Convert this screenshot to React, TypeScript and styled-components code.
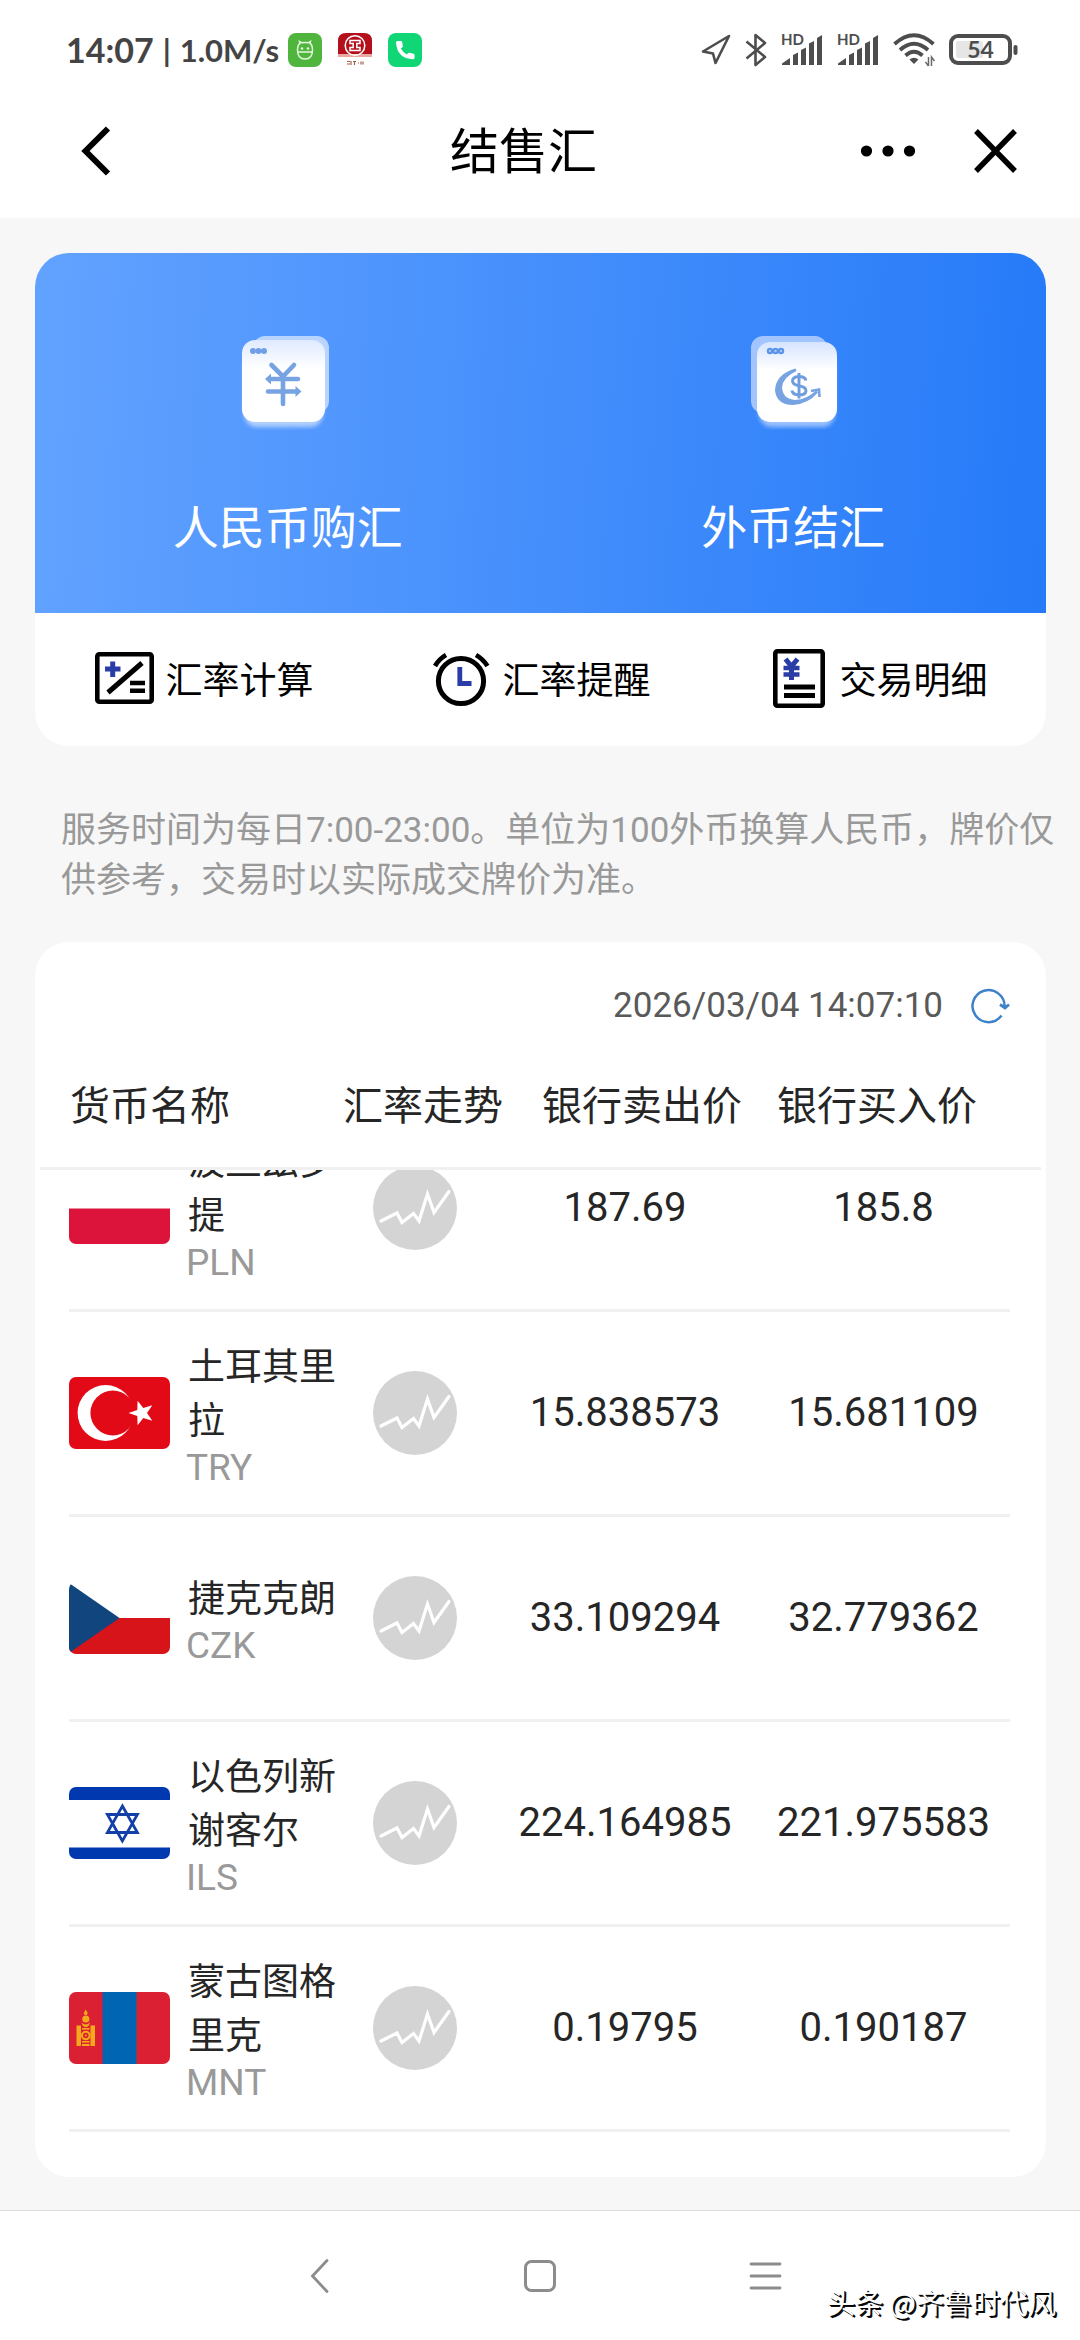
import React, { useLayoutEffect, useRef } from 'react';
import styled, { createGlobalStyle } from 'styled-components';

const GlobalStyle = createGlobalStyle`
  * { box-sizing: border-box; }
  html, body { margin: 0; padding: 0; }
  body {
    background: #f7f7f7;
    color: #262626;
    font-family: Roboto, "Noto Sans CJK SC", sans-serif;
  }
  button {
    margin: 0;
    padding: 0;
    border: 0;
    background: none;
    color: inherit;
    font: inherit;
    cursor: pointer;
  }
  svg { display: block; flex: none; }
`;

const Screen = styled.div`
  display: flex;
  flex-direction: column;
  height: 100vh;
`;

/* ---------- top ---------- */

const StatusBar = styled.div`
  display: flex;
  align-items: center;
  justify-content: space-between;
  height: 100px;
  padding: 0 62px 0 66px;
  background: #fff;
  color: #444;
  font-family: Lato, "Noto Sans CJK SC", sans-serif;
  font-weight: 700;
`;

const StatusGroup = styled.div<{ $gap: number }>`
  display: flex;
  align-items: center;
  gap: ${(p) => p.$gap}px;
`;

const StatusText = styled.span<{ $size: number }>`
  font-size: ${(p) => p.$size}px;
  line-height: 40px;
  white-space: nowrap;
`;

const TitleBar = styled.header`
  display: flex;
  align-items: center;
  justify-content: space-between;
  height: 118px;
  padding: 0 63px 16px 81px;
  background: #fff;
  color: #000;
`;

const BackButton = styled.button`
  width: 105px;
  height: 60px;
  display: flex;
  align-items: center;
`;

const Title = styled.h1`
  margin: 0;
  padding-top: 4px;
  font-size: 49px;
  line-height: 60px;
  font-weight: 400;
`;

const TitleActions = styled.div`
  display: flex;
  align-items: center;
  gap: 59px;
`;

/* ---------- content ---------- */

const Content = styled.main`
  flex: 1;
  min-height: 0;
  display: flex;
  flex-direction: column;
  padding: 35px 34px 33px 35px;
`;

const ServiceCard = styled.section`
  flex: none;
  border-radius: 34px;
  overflow: hidden;
  background: #fff;
`;

const Hero = styled.div`
  display: grid;
  grid-template-columns: 1fr 1fr;
  background: linear-gradient(93deg, #62a2ff 0%, #458ffc 50%, #267af8 100%);
`;

const HeroButton = styled.button`
  display: flex;
  flex-direction: column;
  align-items: center;
  gap: 68px;
  padding: 77px 0 55px;
  color: #fff;
  font-size: 46px;
  line-height: 60px;
`;

const QuickActions = styled.div`
  display: grid;
  grid-template-columns: repeat(3, 1fr);
`;

const QuickButton = styled.button`
  display: flex;
  align-items: center;
  justify-content: center;
  gap: 12px;
  padding: 36px 0 37px;
  color: #000;
  white-space: nowrap;
`;

const QuickLabel = styled.span`
  padding-top: 6px;
  font-size: 37px;
  line-height: 54px;
`;

const Notice = styled.p`
  flex: none;
  margin: 60px -16px 36px 26px;
  color: #999;
  font-size: 35px;
  line-height: 50px;
`;

const RateCard = styled.section`
  flex: 1;
  min-height: 0;
  display: flex;
  flex-direction: column;
  border-radius: 34px;
  background: #fff;
  overflow: hidden;
`;

const Updated = styled.div`
  flex: none;
  display: flex;
  align-items: center;
  justify-content: flex-end;
  gap: 27px;
  padding: 39px 36px 0 0;
  color: #595959;
  font-size: 35px;
  line-height: 50px;
`;

const RateTable = styled.table`
  flex: 1;
  min-height: 0;
  display: flex;
  flex-direction: column;
`;

const RateHead = styled.thead`
  flex: none;
  display: block;
  margin: 0 5px;
  border-bottom: 3px solid #f0f0f0;
`;

const HeadRow = styled.tr`
  display: grid;
  grid-template-columns: 273fr 199fr 235fr 264fr;
  padding: 51px 0 35px 30px;
`;

const HeadCell = styled.th`
  padding: 0;
  text-align: left;
  font-size: 40px;
  line-height: 50px;
  font-weight: 400;
  white-space: nowrap;
`;

const RateBody = styled.tbody`
  flex: 1;
  min-height: 0;
  display: block;
  padding: 0 36px 45px 34px;
  overflow-y: auto;
  scrollbar-width: none;
`;

const RateRow = styled.tr`
  display: grid;
  grid-template-columns: 268fr 156fr 264fr 253fr;
  align-items: center;
  height: 205px;
  border-bottom: 3px solid #f0f0f0;
`;

const Cell = styled.td`
  display: flex;
  align-items: center;
  justify-content: center;
  padding: 0;
  font-size: 40px;
  line-height: 50px;
`;

const CurrencyCell = styled(Cell)`
  justify-content: flex-start;
  gap: 16px;
`;

const FlagFrame = styled.span`
  flex: none;
  width: 101px;
  height: 72px;
  border-radius: 7px;
  overflow: hidden;
`;

const CurrencyText = styled.span`
  display: flex;
  flex-direction: column;
  font-size: 37px;
`;

const CurrencyName = styled.span`
  padding: 2px 0 0 2px;
  line-height: 54px;
`;

const CurrencyCode = styled.span`
  color: #999;
  line-height: 38px;
`;

/* ---------- bottom ---------- */

const SystemNav = styled.nav`
  position: relative;
  display: flex;
  align-items: center;
  justify-content: center;
  gap: 183px;
  height: 130px;
  border-top: 1px solid #dcdcdc;
  background: #fff;
`;

const Watermark = styled.span`
  position: absolute;
  right: 24px;
  bottom: 18px;
  color: #fff;
  font-family: "Noto Sans CJK SC", sans-serif;
  font-size: 28px;
  line-height: 40px;
  text-shadow: 1px 1px 0 #000, 2px 2px 0 #111;
`;

/* ---------- status icons ---------- */

const CleanerIcon = () => (
  <svg width="34" height="34" viewBox="0 0 34 34">
    <rect width="34" height="34" rx="8" fill="#4fb53c" />
    <g fill="none" stroke="#e4f7df" strokeWidth="1.5">
      <path d="M9.5 17 Q9.500 12 12 10.500 L11.500 8.500 L14 9.800 Q17 9 20 9.800 L22.500 8.500 L22 10.500 Q24.500 12 24.500 17 Q24.500 26 17 26 Q9.500 26 9.500 17Z" />
      <path d="M9.500 19 H24.500" />
    </g>
    <circle cx="14" cy="15.500" r="1.300" fill="#e4f7df" />
    <circle cx="20" cy="15.500" r="1.300" fill="#e4f7df" />
  </svg>
);

const BankIcon = () => (
  <svg width="34" height="34" viewBox="0 0 34 34">
    <path d="M8 0 H26 Q34 0 34 8 V23 H0 V8 Q0 0 8 0Z" fill="#b4101c" />
    <rect y="21" width="34" height="3" fill="#e9a8a4" />
    <circle cx="17" cy="12.500" r="9.800" fill="none" stroke="#fff" strokeWidth="1.500" />
    <path d="M12 7.500 H22 V10.500 H18.800 V14.500 H22 V17.500 H12 V14.500 H15.200 V10.500 H12Z" fill="none" stroke="#fff" strokeWidth="1.500" />
    <path d="M9 28.500 h3 M9 31 h3 M13 28 v4 M15 28.500 h3 M16.500 28 v4 M20 30 h1 M23 28.500 v3 M25 28.500 v3" stroke="#a2614f" strokeWidth="1.200" />
  </svg>
);

const PhoneIcon = () => (
  <svg width="34" height="34" viewBox="0 0 34 34">
    <rect width="34" height="34" rx="8" fill="#10d676" />
    <path d="M8 9.500 Q8 8 9.500 8 L13 8 Q14 8 14.200 9 L14.800 13 Q14.900 14 14 14.700 L12.800 15.600 Q15 19.500 18.800 21.500 L20 20.200 Q20.700 19.500 21.500 19.700 L25.500 20.700 Q26.500 21 26.500 22 V25 Q26.500 26.300 25 26.300 Q9 25.500 8 9.500Z" fill="#fff" />
  </svg>
);

const LocationIcon = () => (
  <svg width="30" height="32" viewBox="0 0 30 32">
    <path d="M2 17.500 L28 2 L14.500 29 L12 19.500Z" fill="none" stroke="#4d4d4d" strokeWidth="2.600" strokeLinejoin="round" />
  </svg>
);

const BluetoothIcon = () => (
  <svg width="22" height="36" viewBox="0 0 22 36">
    <path d="M1.500 9.500 L20 25 L10.500 33 V3 L20 11 L1.500 26.500" fill="none" stroke="#4d4d4d" strokeWidth="2.600" strokeLinejoin="round" />
  </svg>
);

const SignalIcon = () => (
  <svg width="42" height="44" viewBox="0 -6 42 44">
    <g fill="#4d4d4d">
      <text x="0" y="11" fontFamily="Lato, sans-serif" fontSize="15" fontWeight="700">HD</text>
      <path d="M1 31 L1 29.500 L9 24 V31Z" />
      <path d="M12 21 L17 18.500 V31 H12Z" />
      <path d="M20 16 L25 13.500 V31 H20Z" />
      <path d="M28 9.500 L33 7 V31 H28Z" />
      <path d="M36 4 L41 1 V31 H36Z" />
    </g>
  </svg>
);

const WifiIcon = () => (
  <svg width="42" height="34" viewBox="0 0 42 34">
    <g fill="none" stroke="#4d4d4d" strokeWidth="3.800">
      <path d="M1.500 11 Q21 -6.500 40.500 11" />
      <path d="M7 17 Q21 4.500 35 17" />
      <path d="M12.500 22.500 Q21 15 29.500 22.500" />
    </g>
    <path d="M16.500 26.500 Q21 23 25.500 26.500 L21 31Z" fill="#4d4d4d" />
    <path d="M35.500 24 V33 M32.500 29 L35.500 33 M38.500 33 V24 L41.500 28" fill="none" stroke="#6a6a6a" strokeWidth="1.500" />
  </svg>
);

const BatteryIcon = () => (
  <svg width="69" height="32" viewBox="0 0 69 32">
    <rect x="2" y="2" width="59" height="27" rx="7" fill="#fff" stroke="#4d4d4d" strokeWidth="4" />
    <rect x="7" y="7" width="27" height="17" rx="2" fill="#e6e6e6" />
    <rect x="64.500" y="11" width="4" height="10" rx="2" fill="#4d4d4d" />
    <text x="31.500" y="24" textAnchor="middle" fontFamily="Lato, sans-serif" fontSize="23" fontWeight="700" fill="#4d4d4d">54</text>
  </svg>
);

/* ---------- page icons ---------- */

const BackIcon = () => (
  <svg width="30" height="50" viewBox="0 0 30 50">
    <path d="M27 2.500 L4.500 25 L27 47.500" fill="none" stroke="#000" strokeWidth="6" />
  </svg>
);

const MoreIcon = () => (
  <svg width="54" height="12" viewBox="0 0 54 12">
    <circle cx="5.500" cy="6" r="5.600" />
    <circle cx="27" cy="6" r="5.600" />
    <circle cx="48.500" cy="6" r="5.600" />
  </svg>
);

const CloseIcon = () => (
  <svg width="43" height="44" viewBox="0 0 43 44">
    <path d="M2 2 L41 42 M41 2 L2 42" fill="none" stroke="#000" strokeWidth="5.400" />
  </svg>
);

const BuyIcon = () => (
  <svg width="96" height="100" viewBox="1 0 96 100">
    <defs>
      <linearGradient id="buyFront" x1="0" y1="0" x2="0" y2="1">
        <stop offset="0" stopColor="#dfeaff" />
        <stop offset="0.350" stopColor="#fff" />
      </linearGradient>
      <filter id="buyGlow" x="-20%" y="-20%" width="140%" height="140%">
        <feGaussianBlur stdDeviation="2.200" />
      </filter>
    </defs>
    <rect x="5" y="22" width="79" height="75" rx="13" fill="#fff" opacity="0.550" filter="url(#buyGlow)" />
    <rect x="14" y="6" width="76" height="77" rx="12" fill="#b9d5ff" />
    <rect x="3" y="10" width="83" height="82" rx="13" fill="url(#buyFront)" />
    <g fill="#6f9fe6">
      <circle cx="14" cy="21" r="3" />
      <circle cx="19.500" cy="21" r="3" />
      <circle cx="25" cy="21" r="3" />
    </g>
    <path d="M32.500 35 L44 46.500 L55 35 M44 46.500 V74 M31 49 H59 M29 61.500 H58" fill="none" stroke="#77a3e2" strokeWidth="4.600" strokeLinecap="round" />
    <path d="M26 49 L32 43.500 V54.500Z M62.500 61.500 L56.500 56 V67Z" fill="#77a3e2" />
  </svg>
);

const SellIcon = () => (
  <svg width="96" height="100" viewBox="-2 0 96 100">
    <defs>
      <linearGradient id="sellFront" x1="0" y1="0" x2="0" y2="1">
        <stop offset="0" stopColor="#d6e4ff" />
        <stop offset="0.350" stopColor="#fff" />
      </linearGradient>
      <filter id="sellGlow" x="-20%" y="-20%" width="140%" height="140%">
        <feGaussianBlur stdDeviation="2.200" />
      </filter>
    </defs>
    <rect x="12" y="22" width="76" height="75" rx="13" fill="#fff" opacity="0.500" filter="url(#sellGlow)" />
    <rect x="4" y="6" width="76" height="77" rx="12" fill="#a3c5ff" />
    <rect x="10" y="12" width="80" height="80" rx="13" fill="url(#sellFront)" />
    <g fill="#a9c6f5" stroke="#5a93ea" strokeWidth="2">
      <circle cx="23" cy="21" r="2.200" />
      <circle cx="28.500" cy="21" r="2.200" />
      <circle cx="34" cy="21" r="2.200" />
    </g>
    <path d="M48.500 38.500 Q29 44 28 60 Q29 74.500 46 75 Q61 74 71 62.500 L69 60.500 Q60 69.500 48 70 Q36 69 35 57.500 Q36 47 49.500 41Z" fill="#77a3e2" />
    <path d="M64 61 L72 59.500 L72.500 67" fill="none" stroke="#77a3e2" strokeWidth="2.600" />
    <path d="M59 50.500 Q58 46.500 52 46.500 Q45.500 46.800 45.500 51 Q45.500 54.500 52 55.800 Q59 57 59 61 Q58.500 65 52 65 Q45.500 64.800 45 60.500 M52 43 V68.500" fill="none" stroke="#6f9ddf" strokeWidth="2.900" />
  </svg>
);

const CalculatorIcon = () => (
  <svg width="60" height="60" viewBox="0 0 60 60" fill="none" stroke="#000">
    <rect x="3.300" y="5.300" width="54.400" height="47.400" rx="2" strokeWidth="4.600" />
    <path d="M14 43.500 L48 14" strokeWidth="5" />
    <path d="M36 34 H51 M36 41.700 H51" strokeWidth="4.400" />
    <path d="M11 20 H26.500 M18.700 12.500 V28" stroke="#2a3da6" strokeWidth="5" />
  </svg>
);

const AlarmIcon = () => (
  <svg width="60" height="60" viewBox="0 0 60 60" fill="none" stroke="#000">
    <circle cx="30" cy="32" r="22.600" strokeWidth="5" />
    <path d="M4 17 Q8 10 15 6 M45 6 Q52 10 56.500 17" strokeWidth="4.600" />
    <path d="M28.800 18 V34.500 H40.500" stroke="#2a3da6" strokeWidth="4.800" />
  </svg>
);

const RecordIcon = () => (
  <svg width="60" height="60" viewBox="0 0 60 60" fill="none" stroke="#000">
    <rect x="7.300" y="2.300" width="47.400" height="54.400" rx="2" strokeWidth="4.600" />
    <path d="M16 38 H47 M16 46.500 H47" strokeWidth="4.800" />
    <path d="M17.500 10 L23.500 17.500 L29.500 10 M23.500 17 V31" stroke="#2a3da6" strokeWidth="5" />
    <path d="M15.500 19 H31.500 M15.500 25.500 H31.500" stroke="#2a3da6" strokeWidth="4.600" />
  </svg>
);

const RefreshIcon = () => (
  <svg width="40" height="36" viewBox="0 0 40 36">
    <path d="M31.500 27.500 A16 16 0 1 1 34.500 19" fill="none" stroke="#3f82c9" strokeWidth="2.500" />
    <path d="M30 16.500 L35 20 L39 16.500" fill="none" stroke="#3f82c9" strokeWidth="2.800" />
    <path d="M31 17 H38.500 L35 21.500Z" fill="#3f82c9" />
  </svg>
);

const TrendIcon = () => (
  <svg width="84" height="84" viewBox="0 0 84 84">
    <circle cx="42" cy="42" r="42" fill="#d4d4d4" />
    <polyline
      points="8,55 24,47 29,56.500 40.500,47.500 46,55 54.500,28 61,46.500 76,25.500"
      fill="none"
      stroke="#fff"
      strokeWidth="3.200"
      strokeLinecap="round"
    />
  </svg>
);

/* ---------- flags ---------- */

const PolandFlag = () => (
  <svg width="101" height="72" viewBox="0 0 101 72">
    <rect width="101" height="72" fill="#fff" />
    <rect y="36.500" width="101" height="35.500" fill="#dc143c" />
  </svg>
);

const TurkeyFlag = () => (
  <svg width="101" height="72" viewBox="0 0 101 72">
    <rect width="101" height="72" fill="#e30a17" />
    <circle cx="36.600" cy="36" r="28" fill="#fff" />
    <circle cx="43.800" cy="36" r="22.400" fill="#e30a17" />
    <polygon
      fill="#fff"
      points="59.500,36 68.300,33 68.600,23.700 74.300,31 83.300,28.300 78,36 83.300,43.700 74.300,41 68.600,48.300 68.300,39"
    />
  </svg>
);

const CzechFlag = () => (
  <svg width="101" height="72" viewBox="0 0 101 72">
    <rect width="101" height="72" fill="#fff" />
    <rect y="36" width="101" height="36" fill="#d7141a" />
    <path d="M0 1 L50.500 36 L0 71Z" fill="#11457e" />
  </svg>
);

const IsraelFlag = () => (
  <svg width="101" height="72" viewBox="0 0 101 72">
    <rect width="101" height="72" fill="#fff" />
    <rect width="101" height="13" fill="#0038b0" />
    <rect y="60.500" width="101" height="11.500" fill="#0038b0" />
    <path d="M53.400 19 L68.400 45.500 H38.400Z M53.400 54 L38.400 27.500 H68.400Z" fill="none" stroke="#1340a8" strokeWidth="2.800" />
  </svg>
);

const MongoliaFlag = () => (
  <svg width="101" height="72" viewBox="0 0 101 72">
    <rect width="101" height="72" fill="#da2032" />
    <rect x="33.500" width="34" height="72" fill="#0066b3" />
    <g fill="#f6a81c">
      <rect x="7.500" y="33.500" width="4.500" height="20.500" />
      <rect x="21.500" y="33.500" width="4.500" height="20.500" />
      <path d="M16.700 17.500 L18.700 21 L17.800 23 H15.600 L14.800 21Z" />
      <circle cx="16.800" cy="27" r="3.600" />
      <path d="M12.500 30.500 Q16.800 34.500 21 30.500 Q20 35 16.800 35 Q13.500 35 12.500 30.500Z" />
      <rect x="13" y="36" width="7.500" height="1.600" />
      <rect x="13" y="49" width="7.500" height="1.600" />
      <rect x="13" y="52" width="7.500" height="2" />
    </g>
    <circle cx="16.800" cy="43.500" r="3.800" fill="none" stroke="#f6a81c" strokeWidth="2" />
    <circle cx="16.800" cy="43.500" r="1" fill="#f6a81c" />
  </svg>
);

/* ---------- data ---------- */

type Rate = {
  code: string;
  name: string;
  sell: string;
  buy: string;
  Flag: () => React.ReactElement;
};

const rates: Rate[] = [
  { code: 'PLN', name: '波兰兹罗提', sell: '187.69', buy: '185.8', Flag: PolandFlag },
  { code: 'TRY', name: '土耳其里拉', sell: '15.838573', buy: '15.681109', Flag: TurkeyFlag },
  { code: 'CZK', name: '捷克克朗', sell: '33.109294', buy: '32.779362', Flag: CzechFlag },
  { code: 'ILS', name: '以色列新谢客尔', sell: '224.164985', buy: '221.975583', Flag: IsraelFlag },
  { code: 'MNT', name: '蒙古图格里克', sell: '0.19795', buy: '0.190187', Flag: MongoliaFlag },
];

const columns = ['货币名称', '汇率走势', '银行卖出价', '银行买入价'];

export default function App() {
  const bodyRef = useRef<HTMLTableSectionElement>(null);

  // The list opens at its last currency.
  useLayoutEffect(() => {
    const body = bodyRef.current;
    if (body) body.scrollTop = body.scrollHeight;
  }, []);

  return (
    <Screen>
      <GlobalStyle />

      <StatusBar>
        <StatusGroup $gap={9}>
          <StatusText $size={34}>14:07</StatusText>
          <StatusText $size={31}>|</StatusText>
          <StatusText $size={31}>1.0M/s</StatusText>
          <StatusGroup $gap={16}>
            <CleanerIcon />
            <BankIcon />
            <PhoneIcon />
          </StatusGroup>
        </StatusGroup>
        <StatusGroup $gap={14}>
          <LocationIcon />
          <BluetoothIcon />
          <SignalIcon />
          <SignalIcon />
          <WifiIcon />
          <BatteryIcon />
        </StatusGroup>
      </StatusBar>

      <TitleBar>
        <BackButton aria-label="返回">
          <BackIcon />
        </BackButton>
        <Title>结售汇</Title>
        <TitleActions>
          <button aria-label="更多">
            <MoreIcon />
          </button>
          <button aria-label="关闭">
            <CloseIcon />
          </button>
        </TitleActions>
      </TitleBar>

      <Content>
        <ServiceCard>
          <Hero>
            <HeroButton>
              <BuyIcon />
              人民币购汇
            </HeroButton>
            <HeroButton>
              <SellIcon />
              外币结汇
            </HeroButton>
          </Hero>
          <QuickActions>
            <QuickButton>
              <CalculatorIcon />
              <QuickLabel>汇率计算</QuickLabel>
            </QuickButton>
            <QuickButton>
              <AlarmIcon />
              <QuickLabel>汇率提醒</QuickLabel>
            </QuickButton>
            <QuickButton>
              <RecordIcon />
              <QuickLabel>交易明细</QuickLabel>
            </QuickButton>
          </QuickActions>
        </ServiceCard>

        <Notice>
          服务时间为每日7:00-23:00。单位为100外币换算人民币，牌价仅供参考，交易时以实际成交牌价为准。
        </Notice>

        <RateCard>
          <Updated>
            <time dateTime="2026-03-04T14:07:10">2026/03/04 14:07:10</time>
            <button aria-label="刷新">
              <RefreshIcon />
            </button>
          </Updated>
          <RateTable>
            <RateHead>
              <HeadRow>
                {columns.map((label) => (
                  <HeadCell key={label} scope="col">
                    {label}
                  </HeadCell>
                ))}
              </HeadRow>
            </RateHead>
            <RateBody ref={bodyRef}>
              {rates.map(({ code, name, sell, buy, Flag }) => (
                <RateRow key={code}>
                  <CurrencyCell>
                    <FlagFrame>
                      <Flag />
                    </FlagFrame>
                    <CurrencyText>
                      <CurrencyName>{name}</CurrencyName>
                      <CurrencyCode>{code}</CurrencyCode>
                    </CurrencyText>
                  </CurrencyCell>
                  <Cell>
                    <button aria-label={`${name}汇率走势`}>
                      <TrendIcon />
                    </button>
                  </Cell>
                  <Cell>{sell}</Cell>
                  <Cell>{buy}</Cell>
                </RateRow>
              ))}
            </RateBody>
          </RateTable>
        </RateCard>
      </Content>

      <SystemNav>
        <button aria-label="系统返回">
          <svg width="40" height="40" viewBox="0 0 40 40">
            <path d="M30 4.500 L15.500 20 L30 35.500" fill="none" stroke="#8c8c8c" strokeWidth="2.800" strokeLinecap="round" />
          </svg>
        </button>
        <button aria-label="主屏幕">
          <svg width="40" height="40" viewBox="0 0 40 40">
            <rect x="5.500" y="5.500" width="29" height="29" rx="6" fill="none" stroke="#8c8c8c" strokeWidth="3" />
          </svg>
        </button>
        <button aria-label="最近任务">
          <svg width="40" height="40" viewBox="0 0 40 40">
            <path d="M8 8 H37 M8 20 H37 M8 32 H37" fill="none" stroke="#8c8c8c" strokeWidth="2.800" strokeLinecap="round" />
          </svg>
        </button>
        <Watermark>头条 @齐鲁时代风</Watermark>
      </SystemNav>
    </Screen>
  );
}
